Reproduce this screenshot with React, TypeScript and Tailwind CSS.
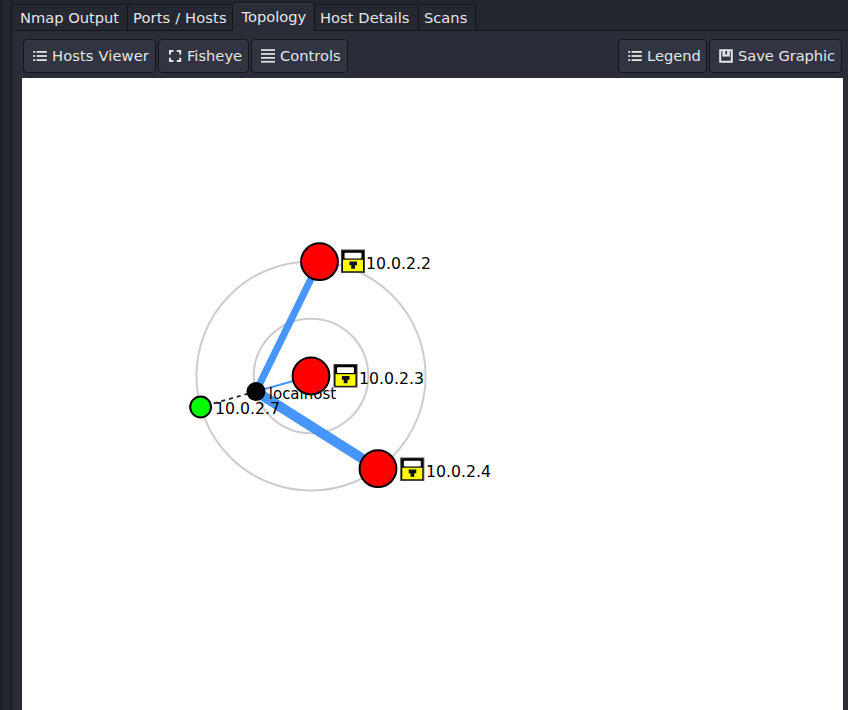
import React from "react";

const tabs = [
  { label: "Nmap Output", box: "w-[116px]", text: "w-[99px]" },
  { label: "Ports / Hosts", box: "w-[105px]", text: "w-[94px] tracking-[0.13px]" },
  { label: "Topology", box: "w-[82px]", text: "w-[64px]", active: true },
  { label: "Host Details", box: "w-[104px]", text: "w-[93px] tracking-[0.06px]" },
  { label: "Scans", box: "w-[57px]", text: "w-[46px]" },
];

function ListIcon() {
  return (
    <svg width="16" height="16" fill="#e3e5e6">
      {[3, 7.1, 11.2].map((y) => (
        <g key={y}>
          <rect x="1.2" y={y} width="2" height="1.8" />
          <rect x="4.6" y={y} width="10.2" height="1.8" />
        </g>
      ))}
    </svg>
  );
}

function FisheyeIcon() {
  return (
    <svg width="16" height="16" fill="none" stroke="#e3e5e6" strokeWidth="2">
      <path d="M3 6.5V3H6.5M9.8 3h3.4v3.5M13.2 9.7v3.4h-3.4M6.5 13.1H3v-3.4" />
    </svg>
  );
}

function LinesIcon() {
  return (
    <svg width="16" height="16" fill="#e3e5e6">
      {[1.2, 5.1, 9, 12.9].map((y) => (
        <rect key={y} x="1" y={y} width="14" height="1.7" />
      ))}
    </svg>
  );
}

function SaveIcon() {
  return (
    <svg width="16" height="16" fill="none">
      <path d="M2.2 2.2H13.8V13.8H2.2Z" stroke="#e3e5e6" strokeWidth="2" />
      <path d="M4.4 2H11.8v6.6H4.4z" fill="#e3e5e6" />
      <path d="M7.3 3h1.8v3.4H7.3z" fill="#323541" />
    </svg>
  );
}

function Button({
  icon,
  label,
  box,
  text = "",
}: {
  icon: React.ReactNode;
  label: string;
  box: string;
  text?: string;
}) {
  return (
    <button
      className={`flex h-[34px] shrink-0 items-center gap-1 whitespace-nowrap rounded-[4px] border border-[#13151b] bg-[#323541] pl-2 shadow-[inset_0_1px_0_#393c48] ${box}`}
    >
      {icon}
      <span className={text}>{label}</span>
    </button>
  );
}

function Lock({ x, y }: { x: number; y: number }) {
  return (
    <g transform={`translate(${x} ${y})`}>
      <rect x="0.5" y="0.5" width="23" height="22.5" fill="#000" stroke="#444" />
      <rect x="3.5" y="3.2" width="17" height="5.8" rx="1" fill="#fff" />
      <rect x="2" y="10.2" width="20" height="11.6" fill="#ff0" />
      <path d="M8.4 12h7.6v3.8h-2v3.4h-3.8v-3.4h-1.8z" fill="#111" />
    </g>
  );
}

function Label({ x, y, length, children }: { x: number; y: number; length: number; children: string }) {
  return (
    <text x={x} y={y} textLength={length} lengthAdjust="spacingAndGlyphs" fontSize="15.2" fill="#000">
      {children}
    </text>
  );
}

function Topology() {
  return (
    <svg className="block" width="821" height="632" viewBox="22 78 821 632">
      <g fill="none" stroke="#ccc" strokeWidth="2">
        <circle cx="311" cy="376" r="57.3" />
        <circle cx="311" cy="376" r="114.6" />
      </g>
      <g stroke="#3389ff" strokeOpacity="0.9">
        <path d="M256 391.5L311 376" strokeWidth="2" />
        <path d="M256 391.5L319.5 261.5" strokeWidth="7.2" />
        <path d="M256 391.5L378 468.5" strokeWidth="10" />
      </g>
      <path d="M256 391.5L200.5 407" stroke="#222" strokeWidth="1.8" strokeDasharray="4 4" />
      <circle cx="256" cy="391.5" r="9.5" />
      <Label x={268.8} y={399} length={67.3}>localhost</Label>
      <g stroke="#000" strokeWidth="2">
        <circle cx="319.5" cy="261.7" r="18.4" fill="#f00" />
        <circle cx="311" cy="376" r="18.4" fill="#f00" />
        <circle cx="378" cy="468.7" r="18.4" fill="#f00" />
        <circle cx="200.6" cy="407" r="10.4" fill="#0f0" />
      </g>
      <Lock x={341} y={249.5} />
      <Lock x={333.5} y={364} />
      <Lock x={400.3} y={457.5} />
      <Label x={366} y={269} length={65}>10.0.2.2</Label>
      <Label x={359} y={384} length={65}>10.0.2.3</Label>
      <Label x={426} y={477} length={65}>10.0.2.4</Label>
      <Label x={215} y={414} length={65}>10.0.2.7</Label>
    </svg>
  );
}

export default function App() {
  return (
    <div className="flex h-[710px] w-[848px] overflow-hidden bg-[#23262f] font-['DejaVu_Sans',sans-serif] text-[14.67px] leading-none text-[#e3e5e6]">
      <div className="w-3 shrink-0 border-r border-[#13151b] pl-px">
        <div className="h-full w-px bg-[#13151b]" />
      </div>
      <main className="flex w-[836px] flex-col bg-[#2a2c37]">
        <nav className="flex h-[31px] shrink-0 items-end bg-[#23262f] shadow-[inset_0_-1px_0_#13151b]">
          {tabs.map((tab) => (
            <button
              key={tab.label}
              className={`flex shrink-0 items-center justify-center whitespace-nowrap rounded-t-[3px] border-r border-t border-[#13151b] ${tab.box} ${
                tab.active
                  ? "h-[29px] bg-[#2a2c37] shadow-[inset_0_1px_0_#343741]"
                  : "h-[27px] border-b bg-[#252731] pt-[2px] shadow-[inset_0_1px_0_#2d303a]"
              }`}
            >
              <span className={`text-left ${tab.text}`}>{tab.label}</span>
            </button>
          ))}
        </nav>
        <div className="flex h-[47px] shrink-0 items-start gap-[2px] pl-[11px] pr-[6px] pt-2">
          <Button icon={<ListIcon />} label="Hosts Viewer" box="w-[133px]" text="tracking-[0.12px]" />
          <Button icon={<FisheyeIcon />} label="Fisheye" box="w-[91px]" />
          <Button icon={<LinesIcon />} label="Controls" box="w-[97px]" />
          <div className="flex-1" />
          <Button icon={<ListIcon />} label="Legend" box="w-[89px]" />
          <Button icon={<SaveIcon />} label="Save Graphic" box="w-[133px]" text="tracking-[-0.05px]" />
        </div>
        <div className="ml-[10px] h-[632px] w-[821px] bg-white">
          <Topology />
        </div>
      </main>
    </div>
  );
}
